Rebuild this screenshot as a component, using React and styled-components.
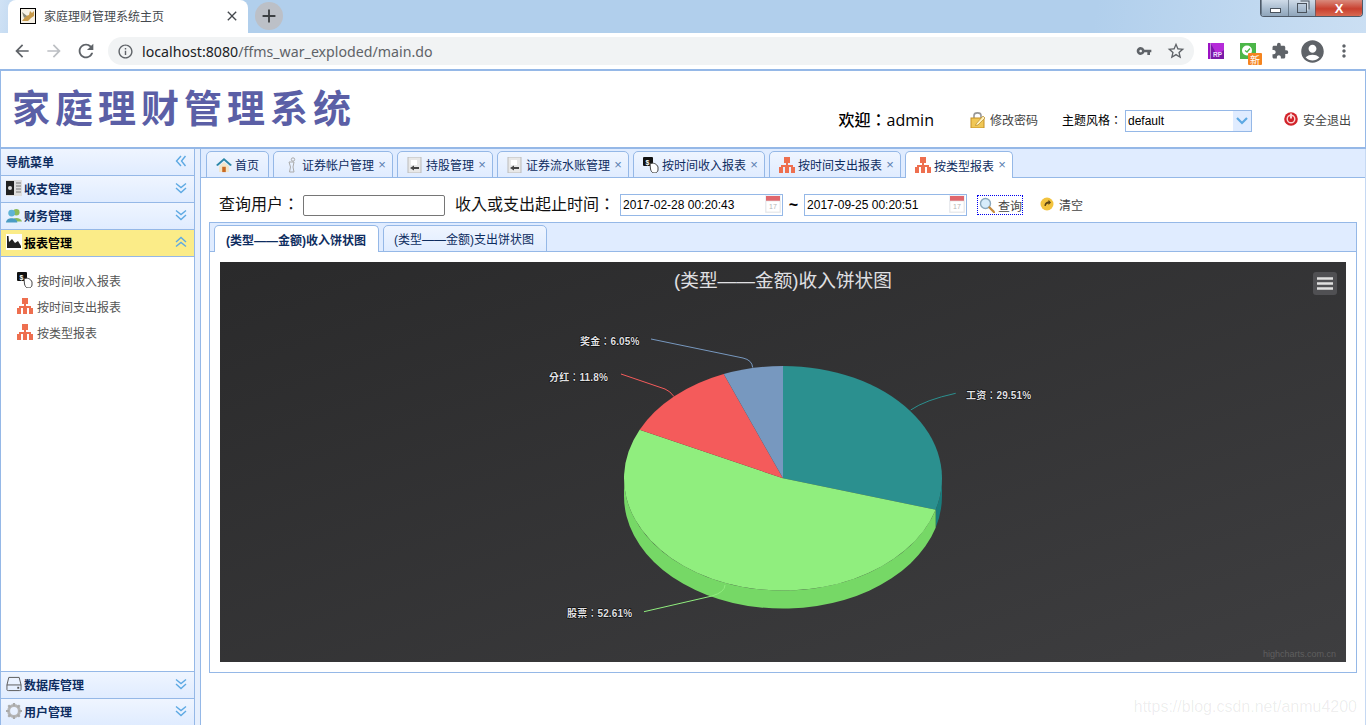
import styled, { createGlobalStyle } from "styled-components";
import {
  MdAdd,
  MdAccountCircle,
  MdArrowBack,
  MdArrowForward,
  MdClose,
  MdExtension,
  MdInfoOutline,
  MdMoreVert,
  MdRefresh,
  MdStarBorder,
  MdVpnKey,
} from "react-icons/md";

const GlobalStyle = createGlobalStyle`
  html, body {
    margin: 0;
    height: 725px;
    overflow: hidden;
    background: #fff;
    font-family: "Liberation Sans", "Noto Sans CJK SC", sans-serif;
    font-size: 12px;
  }
  * { box-sizing: border-box; }
`;

/* ---------- small drawn icons ---------- */
const OrgIcon = () => (
  <svg width="16" height="16" viewBox="0 0 16 16">
    <g fill="#ee6f4f">
      <rect x="5" y="0" width="6" height="6" />
      <rect x="7" y="6" width="2" height="3" />
      <rect x="2" y="8" width="12" height="2" />
      <rect x="0" y="10" width="4" height="6" />
      <rect x="6" y="10" width="4" height="6" />
      <rect x="12" y="10" width="4" height="6" />
    </g>
  </svg>
);

const MoneyHandIcon = () => (
  <svg width="16" height="16" viewBox="0 0 16 16">
    <rect x="0" y="0" width="10" height="9" rx="1" fill="#111" />
    <text x="2.5" y="7.5" fontSize="7" fontWeight="700" fill="#fff" fontFamily="Liberation Sans">$</text>
    <path d="M7 7 C10 5 14 7 15 10 L15 13 C15 15 13 16 11 16 C9 16 8 14 7.5 12 Z" fill="#fff" stroke="#444" strokeWidth="1" />
  </svg>
);

const HomeIcon = () => (
  <svg width="18" height="16" viewBox="0 0 18 16">
    <path d="M9 0 L0 8 L2 9 L9 3 L16 9 L18 8 Z" fill="#2b87a8" />
    <path d="M3.5 9 L9 4.5 L14.5 9 L14.5 16 L3.5 16 Z" fill="#f3e6c8" />
    <rect x="7" y="10" width="4" height="6" fill="#c96a22" />
  </svg>
);

const PersonIcon = () => (
  <svg width="16" height="16" viewBox="0 0 16 16" fill="none" stroke="#aaa" strokeWidth="1">
    <circle cx="10" cy="2.5" r="1.7" />
    <path d="M6 5 L11 5 L10 10 L11 15 L6.5 15 L7.5 10 Z" />
  </svg>
);

const DocIcon = () => (
  <svg width="16" height="16" viewBox="0 0 16 16">
    <rect x="1" y="0" width="13" height="16" fill="#e8e8e8" stroke="#bbb" />
    <rect x="4" y="3" width="6" height="5" fill="#fff" />
    <path d="M3 11 L7 8.5 L7 10 L12 10 L12 12 L7 12 L7 13.5 Z" fill="#444" />
  </svg>
);

const LockIcon = () => (
  <svg width="16" height="17" viewBox="0 0 16 17">
    <path d="M4 8 L4 4.5 C4 1 11 1 11 4.5 L11 8" fill="none" stroke="#999" strokeWidth="1.6" />
    <rect x="1" y="7" width="13" height="10" fill="#f0c755" stroke="#c48f25" />
    <path d="M6 13 L13 5 L15 7 L8 14 L5.5 14.5 Z" fill="#fff3c0" stroke="#b98a2a" strokeWidth="0.7" />
  </svg>
);

const LogoutIcon = () => (
  <svg width="14" height="14" viewBox="0 0 14 14">
    <circle cx="7" cy="7" r="6.8" fill="#d2232a" />
    <circle cx="7" cy="7" r="3.8" fill="none" stroke="#fbd6d6" strokeWidth="1.4" />
    <rect x="6" y="1.5" width="2" height="5" fill="#fbd6d6" />
  </svg>
);

const SearchIcon = () => (
  <svg width="16" height="16" viewBox="0 0 16 16">
    <circle cx="6.5" cy="6.5" r="5" fill="#d7ecfb" stroke="#8aa8bd" strokeWidth="1.4" />
    <path d="M10.5 10.5 L15 15" stroke="#c58a3d" strokeWidth="2.4" strokeLinecap="round" />
  </svg>
);

const ClearIcon = () => (
  <svg width="14" height="16" viewBox="0 0 14 16">
    <circle cx="7" cy="8" r="6.5" fill="#f2c33f" />
    <path d="M4.5 10 C4.5 6.5 7 5.5 8.5 5.5 L8.5 3.8 L11 6.5 L8.5 9 L8.5 7.4 C7 7.4 6 8.4 5.8 10 Z" fill="#5b4416" />
  </svg>
);

const CalendarIcon = () => (
  <svg width="16" height="18" viewBox="0 0 16 18">
    <rect x="0" y="0" width="16" height="18" fill="#eef1f6" />
    <rect x="1" y="1" width="14" height="5" fill="#e0676d" />
    <rect x="1" y="6" width="14" height="11" fill="#fff" stroke="#ddd" strokeWidth="0.6" />
    <text x="4" y="14" fontSize="7" fill="#b5b5b5" fontFamily="Liberation Sans">17</text>
  </svg>
);

const LedgerIcon = () => (
  <svg width="16" height="16" viewBox="0 0 16 16">
    <rect x="0" y="0" width="16" height="16" fill="#ddd" />
    <rect x="0" y="1" width="8" height="14" fill="#222" />
    <circle cx="4" cy="8" r="2" fill="#ddd" />
    <path d="M10 3 H15 M10 6 H15 M10 9 H15 M10 12 H15" stroke="#777" />
  </svg>
);

const UsersIcon = () => (
  <svg width="16" height="16" viewBox="0 0 17 16">
    <circle cx="11" cy="5" r="3.4" fill="#8cbb5a" />
    <path d="M6 15 C6 10 16 10 17 15 Z" fill="#8cbb5a" />
    <circle cx="6" cy="6" r="3.6" fill="#5fb3d6" />
    <path d="M0 16 C0 10 12 10 12 16 Z" fill="#4a9cc4" />
  </svg>
);

const AreaIcon = () => (
  <svg width="16" height="16" viewBox="0 0 16 16">
    <rect width="16" height="16" fill="#fff" />
    <path d="M1 2 V14 H15 V12 L12 7 L9 9 L6 5 L3 8 L2.5 2 Z" fill="#222" />
  </svg>
);

const DiskIcon = () => (
  <svg width="16" height="16" viewBox="0 0 17 16" fill="none">
    <path d="M3 1 H14 L16 9 V14 C16 15 15 15 14 15 H3 C2 15 1 15 1 14 V9 Z" stroke="#555" />
    <path d="M1 9 H16" stroke="#555" />
    <rect x="12" y="11" width="2" height="2" fill="#555" />
  </svg>
);

const GearIcon = () => (
  <svg width="16" height="16" viewBox="0 0 16 16">
    <circle cx="8" cy="8" r="5.4" fill="none" stroke="#b5b5b5" strokeWidth="3" />
    <path d="M8 0 V3 M8 13 V16 M0 8 H3 M13 8 H16 M2.3 2.3 L4.4 4.4 M11.6 11.6 L13.7 13.7 M13.7 2.3 L11.6 4.4 M4.4 11.6 L2.3 13.7" stroke="#aaa" strokeWidth="2.2" />
  </svg>
);

const TomcatIcon = () => (
  <svg width="16" height="16" viewBox="0 0 16 16">
    <rect x="0.5" y="0.5" width="15" height="15" fill="#f6f1e6" stroke="#000" />
    <path d="M2 13 L6 8 L9 7 L10 3 L12 5 L14 3 L14 8 L11 10 L8 13 Z" fill="#c79a4b" />
    <path d="M2 4 L7 8 L4 10 Z" fill="#8a8a7a" />
  </svg>
);

const RpIcon = () => (
  <svg width="16" height="16" viewBox="0 0 16 16">
    <rect width="2" height="16" fill="#9c12c4" />
    <rect x="2.5" width="13.5" height="16" fill="#7a1aa8" />
    <path d="M2.5 0 H16 V7 L9 12 Z" fill="#b52bd9" />
    <text x="5" y="14" fontSize="6.5" fontWeight="700" fill="#eedcff" fontFamily="Liberation Sans">RP</text>
  </svg>
);

const WeChatNewIcon = () => (
  <svg width="32" height="32" viewBox="0 0 32 32">
    <rect x="8" y="8" width="16" height="16" fill="#4cb648" />
    <circle cx="15" cy="15.5" r="5" fill="#fff" />
    <path d="M13 15.5 L15 17 L18 13.5" stroke="#4cb648" strokeWidth="1.3" fill="none" />
    <rect x="16" y="18" width="14" height="12" rx="1" fill="#f5841f" />
    <text x="18" y="28.5" fontSize="10" fill="#fff" fontFamily="Noto Sans CJK SC">新</text>
  </svg>
);

const DoubleChevron = ({ dir }) => {
  const rotate = { down: 0, up: 180, left: 90 }[dir];
  return (
    <svg width="12" height="12" viewBox="0 0 12 12" style={{ transform: `rotate(${rotate}deg)` }}>
      <path d="M1 1.5 L6 5.5 L11 1.5 M1 6 L6 10.5 L11 6" fill="none" stroke="#5da9e3" strokeWidth="1.4" />
    </svg>
  );
};

/* ---------- pie chart ---------- */
const CX = 563;
const CY = 216.3;
const RX = 159;
const RY = 112.3;
const DEPTH = 18;

const slices = [
  { value: 29.51, color: "#2b908f" },
  { value: 52.61, color: "#90ee7e" },
  { value: 11.8, color: "#f45b5b" },
  { value: 6.08, color: "#7798bf" },
];

function pt(deg, dy = 0) {
  const a = (deg * Math.PI) / 180;
  return `${(CX + RX * Math.sin(a)).toFixed(2)} ${(CY - RY * Math.cos(a) + dy).toFixed(2)}`;
}

function slicePath(from, to) {
  const large = to - from > 180 ? 1 : 0;
  return `M${CX} ${CY} L${pt(from)} A${RX} ${RY} 0 ${large} 1 ${pt(to)} Z`;
}

function wallPath(from, to) {
  return `M${pt(from)} A${RX} ${RY} 0 0 1 ${pt(to)} L${pt(to, DEPTH)} A${RX} ${RY} 0 0 0 ${pt(from, DEPTH)} Z`;
}

let running = 0;
const sliceAngles = slices.map((s) => {
  const from = running;
  running += (s.value / 100) * 360;
  return { ...s, from, to: running };
});

const labels = [
  { text: "奖金：6.05%", x: 360, y: 83, line: "M431 77 L523 96 Q532 98 532.7 105.5", color: "#7798bf" },
  { text: "分红：11.8%", x: 329, y: 119, line: "M401 112 L445 127 Q450 129 454 134.5", color: "#f45b5b" },
  { text: "工资：29.51%", x: 746, y: 137, line: "M735.7 131.3 Q705 138 690.7 148", color: "#2b908f" },
  { text: "股票：52.61%", x: 347, y: 355, line: "M424 349.7 L492 334 Q505 330 505 323", color: "#90ee7e" },
];

const PieChart = () => (
  <ChartSvg viewBox="0 0 1126 400" width="1126" height="400">
    <ChartTitle x="563" y="25" textAnchor="middle">(类型——金额)收入饼状图</ChartTitle>
    <path d={wallPath(90, sliceAngles[0].to)} fill="#1a7c7c" />
    <path d={wallPath(sliceAngles[0].to, 270)} fill="#76d866" />
    {sliceAngles.map((s) => (
      <path key={s.color} d={slicePath(s.from, s.to)} fill={s.color} />
    ))}
    {labels.map((l) => (
      <g key={l.text}>
        <path d={l.line} fill="none" stroke={l.color} strokeWidth="1" />
        <DataLabel x={l.x} y={l.y}>{l.text}</DataLabel>
      </g>
    ))}
    <rect x="1093" y="10" width="24" height="23" rx="3" fill="#505053" />
    <path d="M1097 16.5 H1113 M1097 21.5 H1113 M1097 26.5 H1113" stroke="#e0e0e0" strokeWidth="2.4" />
    <Credit x="1116" y="395" textAnchor="end">highcharts.com.cn</Credit>
  </ChartSvg>
);

/* ---------- data ---------- */
const mainTabs = [
  { title: "首页", icon: <HomeIcon />, home: true },
  { title: "证券帐户管理", icon: <PersonIcon /> },
  { title: "持股管理", icon: <DocIcon /> },
  { title: "证券流水账管理", icon: <DocIcon /> },
  { title: "按时间收入报表", icon: <MoneyHandIcon /> },
  { title: "按时间支出报表", icon: <OrgIcon /> },
  { title: "按类型报表", icon: <OrgIcon />, active: true },
];

const App = () => (
  <>
    <GlobalStyle />
    <Browser>
      <TabStrip>
        <BrowserTab>
          <TomcatIcon />
          <BrowserTabTitle>家庭理财管理系统主页</BrowserTabTitle>
          <MdClose size={16} color="#45494e" />
        </BrowserTab>
        <NewTab><MdAdd size={22} color="#3c4043" /></NewTab>
        <WindowControls>
          <WinButton $w={27}><MinGlyph /></WinButton>
          <WinButton $w={27}><RestoreGlyph /></WinButton>
          <WinButton $w={47} $close>X</WinButton>
        </WindowControls>
      </TabStrip>
      <Toolbar>
        <ToolSlot><MdArrowBack size={20} color="#5f6368" /></ToolSlot>
        <ToolSlot><MdArrowForward size={20} color="#bcbfc3" /></ToolSlot>
        <ToolSlot><MdRefresh size={22} color="#5f6368" /></ToolSlot>
        <AddressBar>
          <MdInfoOutline size={17} color="#5f6368" />
          <Url>localhost:8080<UrlPath>/ffms_war_exploded/main.do</UrlPath></Url>
          <KeySlot><MdVpnKey size={16} color="#5f6368" /></KeySlot>
          <MdStarBorder size={20} color="#5f6368" />
        </AddressBar>
        <Extensions>
          <ToolSlot><RpIcon /></ToolSlot>
          <ToolSlot><WeChatNewIcon /></ToolSlot>
          <ToolSlot><MdExtension size={18} color="#5f6368" /></ToolSlot>
          <ToolSlot><MdAccountCircle size={27} color="#5f6368" /></ToolSlot>
          <ToolSlot><MdMoreVert size={20} color="#5f6368" /></ToolSlot>
        </Extensions>
      </Toolbar>
    </Browser>

    <PageHeader>
      <Logo>家庭理财管理系统</Logo>
      <HeaderTools>
        <Welcome>欢迎：<WelcomeName>admin</WelcomeName></Welcome>
        <HeaderLink $gap={36}><LockIcon />修改密码</HeaderLink>
        <ThemeLabel>主题风格：</ThemeLabel>
        <ThemeSelect>
          <span>default</span>
          <SelectArrow><svg width="12" height="8" viewBox="0 0 12 8"><path d="M1 1 L6 6 L11 1" fill="none" stroke="#5da9e3" strokeWidth="2.2" /></svg></SelectArrow>
        </ThemeSelect>
        <HeaderLink $gap={32} $iconGap={5}><LogoutIcon />安全退出</HeaderLink>
      </HeaderTools>
    </PageHeader>

    <Workspace>
      <Sidebar>
        <SideTitle>
          导航菜单
          <DoubleChevron dir="left" />
        </SideTitle>
        <SideGroup><LedgerIcon /><GroupName>收支管理</GroupName><DoubleChevron dir="down" /></SideGroup>
        <SideGroup><UsersIcon /><GroupName>财务管理</GroupName><DoubleChevron dir="down" /></SideGroup>
        <SideGroup $active><AreaIcon /><GroupName>报表管理</GroupName><DoubleChevron dir="up" /></SideGroup>
        <SideBody>
          <SideItem><MoneyHandIcon />按时间收入报表</SideItem>
          <SideItem><OrgIcon />按时间支出报表</SideItem>
          <SideItem><OrgIcon />按类型报表</SideItem>
        </SideBody>
        <SideGroup $top><DiskIcon /><GroupName>数据库管理</GroupName><DoubleChevron dir="down" /></SideGroup>
        <SideGroup><GearIcon /><GroupName>用户管理</GroupName><DoubleChevron dir="down" /></SideGroup>
      </Sidebar>

      <Main>
        <MainTabBar>
          {mainTabs.map((t) => (
            <MainTab key={t.title} $active={t.active} $home={t.home}>
              <TabIcon>{t.icon}</TabIcon>
              {t.title}
              {!t.home && <TabClose>×</TabClose>}
            </MainTab>
          ))}
        </MainTabBar>

        <QueryRow>
          <QueryLabel>查询用户：</QueryLabel>
          <UserInput />
          <QueryLabel $gap={10}>收入或支出起止时间：</QueryLabel>
          <DateBox $gap={5}>2017-02-28 00:20:43<CalendarIcon /></DateBox>
          <Tilde>~</Tilde>
          <DateBox>2017-09-25 00:20:51<CalendarIcon /></DateBox>
          <QueryButton><SearchIcon />查询</QueryButton>
          <ClearButton><ClearIcon />清空</ClearButton>
        </QueryRow>

        <ChartPanel>
          <ChartTabBar>
            <ChartTab $active $width={165}>(类型——金额)收入饼状图</ChartTab>
            <ChartTab $width={164}>(类型——金额)支出饼状图</ChartTab>
          </ChartTabBar>
          <ChartBody>
            <ChartArea><PieChart /></ChartArea>
          </ChartBody>
        </ChartPanel>
      </Main>
    </Workspace>
    <Watermark>https://blog.csdn.net/anmu4200</Watermark>
  </>
);

export default App;

/* ---------- browser chrome ---------- */
const Browser = styled.div`
  height: 69px;
`;

const TabStrip = styled.div`
  height: 33px;
  display: flex;
  align-items: flex-start;
  background: linear-gradient(100deg, #d0e2f5 0, #b1cfec 3%, #b1cfec 80%, #cbdff3 100%);
`;

const BrowserTab = styled.div`
  width: 240px;
  height: 33px;
  margin-left: 8px;
  padding: 0 8px 2px 12px;
  display: flex;
  align-items: center;
  background: #fff;
  border-radius: 8px 8px 0 0;
`;

const BrowserTabTitle = styled.span`
  flex: 1;
  margin-left: 8px;
  color: #45494e;
`;

const NewTab = styled.div`
  width: 28px;
  height: 28px;
  margin: 2px 0 0 7px;
  border-radius: 50%;
  background: #bcc0c7;
  display: flex;
  align-items: center;
  justify-content: center;
`;

const WindowControls = styled.div`
  margin-left: auto;
  margin-right: 3px;
  height: 17px;
  display: flex;
  border: 1px solid #4e5a68;
  border-top: none;
  border-radius: 0 0 4px 4px;
  overflow: hidden;
`;

const WinButton = styled.div`
  width: ${(p) => p.$w}px;
  display: flex;
  align-items: center;
  justify-content: center;
  border-left: 1px solid rgba(70, 85, 100, 0.6);
  color: #fff;
  font-weight: 700;
  font-size: 13px;
  background: ${(p) =>
    p.$close
      ? "linear-gradient(#d98a7c, #c9402f 55%, #d86a52)"
      : "linear-gradient(#cfdbe8, #a9bccf 55%, #8fa5ba)"};
`;

const MinGlyph = styled.i`
  width: 11px;
  height: 5px;
  margin-top: 4px;
  border: 1px solid #49525c;
  background: #fff;
`;

const RestoreGlyph = styled.i`
  width: 10px;
  height: 10px;
  border: 1.5px solid #49525c;
  box-shadow: 2px -2px 0 -0.5px #d5dfe9, 3px -3px 0 -0.5px #49525c;
`;

const Toolbar = styled.div`
  height: 36px;
  padding: 2px 0 2px 6px;
  display: flex;
  align-items: center;
  background: #fff;
`;

const ToolSlot = styled.div`
  width: 32px;
  height: 32px;
  flex: none;
  display: flex;
  align-items: center;
  justify-content: center;
`;

const AddressBar = styled.div`
  width: 1086px;
  height: 28px;
  margin-left: 6px;
  padding: 0 8px 0 9px;
  display: flex;
  align-items: center;
  gap: 7px;
  background: #f1f3f4;
  border-radius: 14px;
`;

const Url = styled.div`
  flex: 1;
  margin-left: 1px;
  font-family: "Noto Sans", sans-serif;
  font-size: 14.2px;
  color: #202124;
`;

const UrlPath = styled.span`
  color: #5f6368;
`;

const KeySlot = styled.span`
  margin-right: 7px;
  display: flex;
`;

const Extensions = styled.div`
  margin-left: 6px;
  display: flex;
`;

/* ---------- page header ---------- */
const PageHeader = styled.header`
  height: 80px;
  padding: 0 14px 0 11px;
  display: flex;
  justify-content: space-between;
  border: 1px solid #95b8e7;
  border-width: 2px 1px 2px 1px;
  background: #fff;
`;

const Logo = styled.div`
  margin-top: 9px;
  font-family: "Noto Sans CJK SC", sans-serif;
  font-size: 38px;
  line-height: 52px;
  font-weight: 700;
  letter-spacing: 5px;
  color: #5b5fa6;
`;

const HeaderTools = styled.div`
  height: 24px;
  margin-top: 36px;
  display: flex;
  align-items: center;
`;

const Welcome = styled.div`
  font-family: "Liberation Sans", "Noto Sans CJK TC", sans-serif;
  font-size: 16px;
  font-weight: 500;
  color: #000;
`;

const WelcomeName = styled.span`
  font-family: "Open Sans", sans-serif;
  font-weight: 400;
`;

const HeaderLink = styled.div`
  margin-left: ${(p) => p.$gap}px;
  display: flex;
  align-items: center;
  gap: ${(p) => p.$iconGap || 4}px;
  color: #444;
`;

const ThemeLabel = styled.div`
  margin-left: 24px;
  font-family: "Liberation Sans", "Noto Sans CJK TC", sans-serif;
  color: #000;
`;

const ThemeSelect = styled.div`
  width: 127px;
  height: 22px;
  margin: 4px 0 0 3px;
  padding-left: 2px;
  display: flex;
  align-items: center;
  justify-content: space-between;
  border: 1px solid #95b8e7;
  color: #000;
`;

const SelectArrow = styled.div`
  width: 18px;
  height: 20px;
  display: flex;
  align-items: center;
  justify-content: center;
  background: #e0ecff;
`;

/* ---------- workspace ---------- */
const Workspace = styled.div`
  height: 576px;
  display: flex;
  background: #e6effd;
`;

const Sidebar = styled.aside`
  width: 195px;
  flex: none;
  display: flex;
  flex-direction: column;
  overflow: hidden;
  border: 1px solid #95b8e7;
  border-width: 0 1px;
  background: #fff;
`;

const barStyle = `
  height: 27px;
  flex: none;
  padding: 0 7px 2px 5px;
  display: flex;
  align-items: center;
  background: linear-gradient(#eff5ff, #e0ecff);
  border-bottom: 1px solid #95b8e7;
  color: #0e2d5f;
  font-weight: 700;
`;

const SideTitle = styled.div`
  ${barStyle}
  justify-content: space-between;
  padding-left: 5px;
`;

const SideGroup = styled.div`
  ${barStyle}
  ${(p) => (p.$active ? "background: #fbec88; color: #000;" : "")}
  ${(p) => (p.$top ? "border-top: 1px solid #95b8e7; height: 28px;" : "")}
`;

const GroupName = styled.span`
  flex: 1;
  margin-left: 2px;
`;

const SideBody = styled.div`
  height: 414px;
  flex: none;
  padding: 10px 0 0 16px;
`;

const SideItem = styled.div`
  height: 26px;
  display: flex;
  align-items: center;
  gap: 4px;
  color: #555;
`;

const Main = styled.main`
  margin-left: 5px;
  flex: 1;
  border: 1px solid #95b8e7;
  border-width: 0 1px;
  border-right-color: #c6d9f3;
  background: #fff;
`;

const MainTabBar = styled.div`
  height: 29px;
  padding: 2px 0 0 5px;
  display: flex;
  gap: 4px;
  background: #e0ecff;
  border-bottom: 1px solid #95b8e7;
`;

const MainTab = styled.div`
  height: 27px;
  padding: 0 ${(p) => (p.$home ? 9 : 6)}px 0 9px;
  display: flex;
  align-items: center;
  border: 1px solid #95b8e7;
  border-bottom: ${(p) => (p.$active ? "none" : "1px solid #95b8e7")};
  border-radius: 5px 5px 0 0;
  background: ${(p) => (p.$active ? "#fff" : "linear-gradient(#eff5ff, #e0ecff)")};
  color: #0e2d5f;
  white-space: nowrap;
`;

const TabIcon = styled.span`
  width: 16px;
  height: 16px;
  margin-right: 3px;
  display: flex;
`;

const TabClose = styled.span`
  width: 8px;
  margin-left: 4px;
  color: #5a7fb0;
  font-size: 13px;
  line-height: 8px;
  text-align: center;
`;

const QueryRow = styled.div`
  height: 44px;
  padding: 10px 0 0 18px;
  display: flex;
  align-items: center;
`;

const QueryLabel = styled.div`
  margin-left: ${(p) => p.$gap || 0}px;
  padding-bottom: 4px;
  font-family: "Liberation Sans", "Noto Sans CJK TC", sans-serif;
  font-size: 16px;
  color: #111;
  white-space: nowrap;
`;

const UserInput = styled.input`
  width: 142px;
  height: 21px;
  margin-left: 4px;
  border: 1px solid #767676;
  border-radius: 2px;
  outline: none;
`;

const DateBox = styled.div`
  width: 163px;
  height: 22px;
  margin-left: ${(p) => p.$gap || 0}px;
  padding: 0 1px 0 2px;
  display: flex;
  align-items: center;
  justify-content: space-between;
  border: 1px solid #95b8e7;
  color: #000;
  white-space: nowrap;

  svg {
    align-self: flex-start;
  }
`;

const Tilde = styled.div`
  width: 21px;
  text-align: center;
  font-size: 16px;
  font-weight: 700;
`;

const QueryButton = styled.div`
  width: 46px;
  height: 20px;
  margin-left: 10px;
  padding-left: 1px;
  display: flex;
  align-items: center;
  gap: 3px;
  border: 1px dotted #0000ee;
  color: #444;
  white-space: nowrap;
`;

const ClearButton = styled.div`
  margin: 0 0 2px 17px;
  display: flex;
  align-items: center;
  gap: 5px;
  color: #444;
`;

const ChartPanel = styled.section`
  width: 1148px;
  margin-left: 8px;
  border: 1px solid #95b8e7;
`;

const ChartTabBar = styled.div`
  height: 29px;
  padding: 2px 0 0 4px;
  display: flex;
  gap: 4px;
  background: #e0ecff;
  border-bottom: 1px solid #95b8e7;
`;

const ChartTab = styled.div`
  width: ${(p) => p.$width}px;
  height: 27px;
  padding: 0 0 0 ${(p) => (p.$active ? 11 : 10)}px;
  display: flex;
  align-items: center;
  border: 1px solid #95b8e7;
  border-bottom: ${(p) => (p.$active ? "none" : "1px solid #95b8e7")};
  border-radius: 5px 5px 0 0;
  background: ${(p) => (p.$active ? "#fff" : "linear-gradient(#eff5ff, #e0ecff)")};
  color: #0e2d5f;
  font-weight: ${(p) => (p.$active ? 700 : 400)};
  white-space: nowrap;
`;

const ChartBody = styled.div`
  padding: 10px;
`;

const ChartArea = styled.div`
  width: 1126px;
  height: 400px;
  background: linear-gradient(to bottom right, #2a2a2b, #3e3e40);
`;

const ChartSvg = styled.svg`
  display: block;
`;

const ChartTitle = styled.text`
  font-size: 18.7px;
  fill: #e0e0e3;
`;

const DataLabel = styled.text`
  font-family: "Liberation Sans", "Noto Sans CJK TC", sans-serif;
  font-size: 10px;
  font-weight: 700;
  letter-spacing: 0.15px;
  fill: #e0e0e3;
  stroke: #000;
  stroke-width: 1px;
  paint-order: stroke;
`;

const Credit = styled.text`
  font-size: 9px;
  fill: #5f5f5f;
`;

const Watermark = styled.div`
  position: absolute;
  right: 9px;
  bottom: 9px;
  font-size: 16px;
  color: rgba(0, 0, 0, 0.08);
`;
